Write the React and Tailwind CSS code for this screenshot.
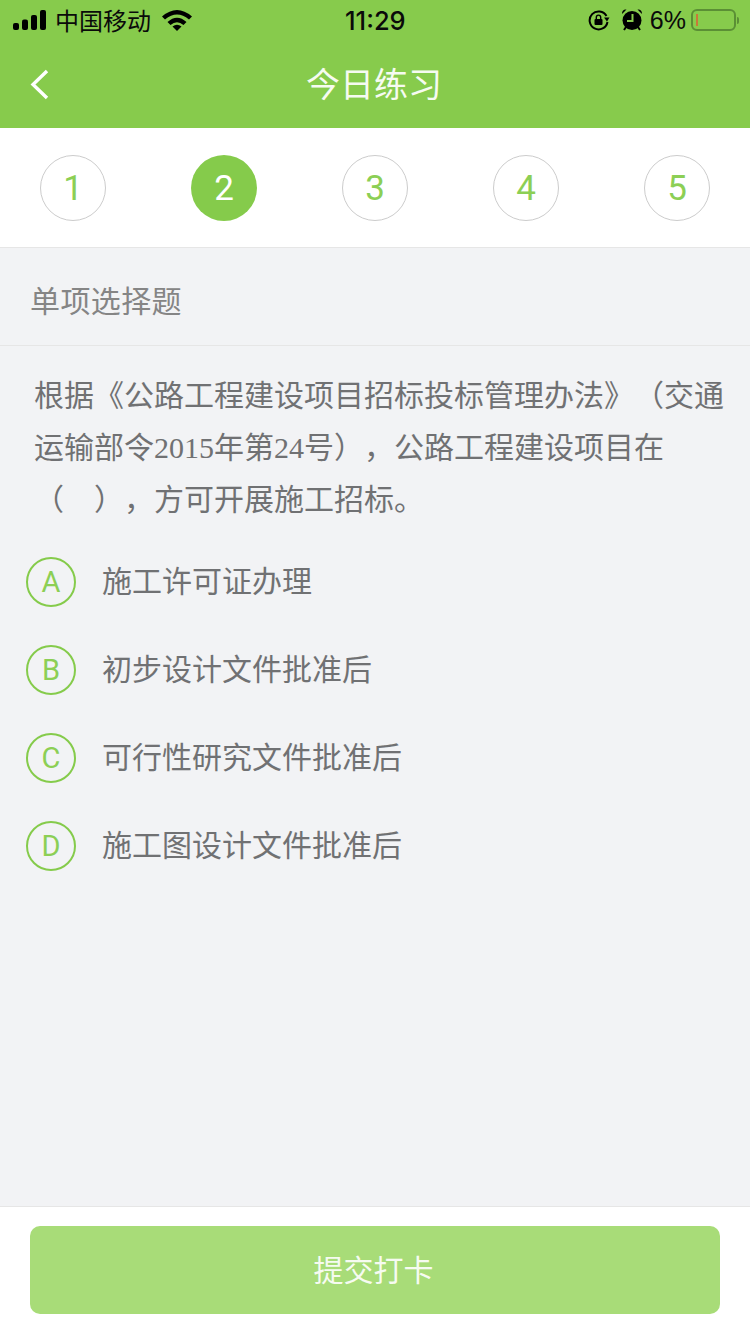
import React from "react";

const CJK = { fontFamily: '"Noto Sans CJK SC","Noto Sans",sans-serif' };
const THIN = { fontFamily: 'Roboto,sans-serif', fontWeight: 400 };
const SERIF = { fontFamily: '"Liberation Serif",serif' };

function Step({ n, active }) {
  return (
    <div className={"w-[66px] h-[66px] rounded-full flex items-center justify-center pt-[2px] text-[35px] " + (active ? "bg-[#85cb4b] text-white" : "border border-[#cccccc] text-[#8ccf55] bg-white")} style={THIN}>
      {n}
    </div>
  );
}

function Option({ l, t }) {
  return (
    <div className="h-[88px] flex items-center pl-[26px]">
      <div className="w-[50px] h-[50px] rounded-full border-2 border-[#85cb4b] text-[#8ccf55] flex items-center justify-center pt-[2px] text-[29px]" style={THIN}>{l}</div>
      <div className="ml-[26px] text-[30px] leading-[50px] pb-[6px] text-[#707173] [text-spacing-trim:space-all]" style={CJK}>{t}</div>
    </div>
  );
}

export default function App() {
  return (
    <div className="w-[750px] h-[1334px] bg-[#f2f3f5] flex flex-col overflow-hidden" style={{ fontFamily: '"Liberation Sans",Arial,sans-serif' }}>
      <div className="h-[128px] bg-[#87cb4c] flex flex-col shrink-0">
        <div className="h-[40px] relative flex items-center justify-between text-[#0a0a0a]">
          <div className="flex items-center pl-[13px]">
            <svg width="34" height="22" viewBox="0 0 34 22" fill="#000">
              <rect x="0" y="14" width="6" height="7" rx="2" />
              <rect x="9" y="10.5" width="6" height="10.5" rx="2" />
              <rect x="18" y="6" width="6" height="15" rx="2" />
              <rect x="27" y="1" width="6" height="20" rx="2" />
            </svg>
            <span className="ml-[8px] text-[24px] leading-none" style={CJK}>中国移动</span>
            <svg className="ml-[10px]" width="32" height="24" viewBox="0 0 32 24" fill="#000">
              <path d="M1 8.500 Q16 -4.500 31 8.500 L28 11.500 Q16 1.500 4 11.500 Z" />
              <path d="M6.500 14 Q16 5.500 25.500 14 L22.500 17 Q16 11.500 9.500 17 Z" />
              <path d="M16 23 L11.500 18.500 Q16 14.800 20.500 18.500 Z" />
            </svg>
          </div>
          <span className="absolute left-[345px] top-[6px] text-[25.5px] leading-[30px] font-medium" style={{ fontFamily: 'Inter,sans-serif' }}>11:29</span>
          <div className="flex items-center pr-[11px]">
            <svg width="22" height="22" viewBox="0 0 22 22" fill="none" stroke="#000" strokeWidth="2">
              <path d="M18.500 7 A9 9 0 1 0 19.500 13" />
              <path d="M16 8.500 L21.500 8.500 L19 12.500 Z" fill="#000" stroke="none" />
              <rect x="6.500" y="10" width="8" height="6" rx="1" fill="#000" stroke="none" />
              <path d="M8.300 10 V8.300 a2.200 2.200 0 0 1 4.400 0 V10" strokeWidth="1.400" />
            </svg>
            <svg className="ml-[11px]" width="22" height="24" viewBox="0 0 22 24" fill="#000">
              <circle cx="11" cy="12.500" r="9.500" />
              <path d="M1 6 L5.500 1.500 Q1 1 1 6 Z M21 6 L16.500 1.500 Q21 1 21 6 Z" />
              <path d="M3 22 L5 19 M19 22 L17 19" stroke="#000" strokeWidth="2" />
              <path d="M11.500 6 V13 H6" stroke="#87cb4c" strokeWidth="2" fill="none" />
            </svg>
            <span className="ml-[7px] text-[25px] leading-none">6%</span>
            <div className="ml-[5px] w-[45px] h-[22px] rounded-[6px] border-2 border-[#5b8f35] flex items-center pl-[3px]">
              <div className="w-[2px] h-[12px] bg-[#c9783a]" />
            </div>
            <div className="ml-[1px] w-[2px] h-[7px] rounded-r bg-[#5b8f35]" />
          </div>
        </div>
        <div className="flex-1 relative flex items-center justify-center pb-[4px]">
          <svg className="absolute left-[28px] top-[28px]" width="22" height="34" viewBox="0 0 22 34" fill="none" stroke="#fff" strokeWidth="3.400">
            <path d="M19 3 L5 16.500 L19 30" />
          </svg>
          <span className="text-[34px] text-[#f6fbf1] pr-[2px]" style={CJK}>今日练习</span>
        </div>
      </div>

      <div className="h-[120px] bg-white border-b border-[#e6e6e6] flex items-center justify-between px-[40px] shrink-0 pt-[1px]">
        <Step n="1" />
        <Step n="2" active />
        <Step n="3" />
        <Step n="4" />
        <Step n="5" />
      </div>

      <div className="h-[98px] border-b border-[#e6e6e6] flex items-center pl-[30px] pt-[5px] text-[30px] tracking-[0.4px] text-[#858585] shrink-0" style={CJK}>单项选择题</div>

      <div className="flex-1">
        <p className="pl-[34px] pt-[21px] text-[30px] leading-[52px] text-[#707173] whitespace-nowrap [text-spacing-trim:space-all]" style={CJK}>
          根据《公路工程建设项目招标投标管理办法》（交通<br />
          运输部令<span className="leading-none" style={SERIF}>2015</span>年第<span className="leading-none" style={SERIF}>24</span>号），公路工程建设项目在<br />
          （<span className="inline-block w-[30px]" />），方可开展施工招标。
        </p>
        <div className="mt-[15px]">
          <Option l="A" t="施工许可证办理" />
          <Option l="B" t="初步设计文件批准后" />
          <Option l="C" t="可行性研究文件批准后" />
          <Option l="D" t="施工图设计文件批准后" />
        </div>
      </div>

      <div className="h-[128px] bg-white border-t border-[#e6e6e6] px-[30px] pt-[19px] shrink-0">
        <div className="h-[88px] rounded-[10px] bg-[#a8dc78] text-[#f6fbf1] text-[30px] flex items-center justify-center pb-[4px] pr-[3px]" style={CJK}>提交打卡</div>
      </div>
    </div>
  );
}
